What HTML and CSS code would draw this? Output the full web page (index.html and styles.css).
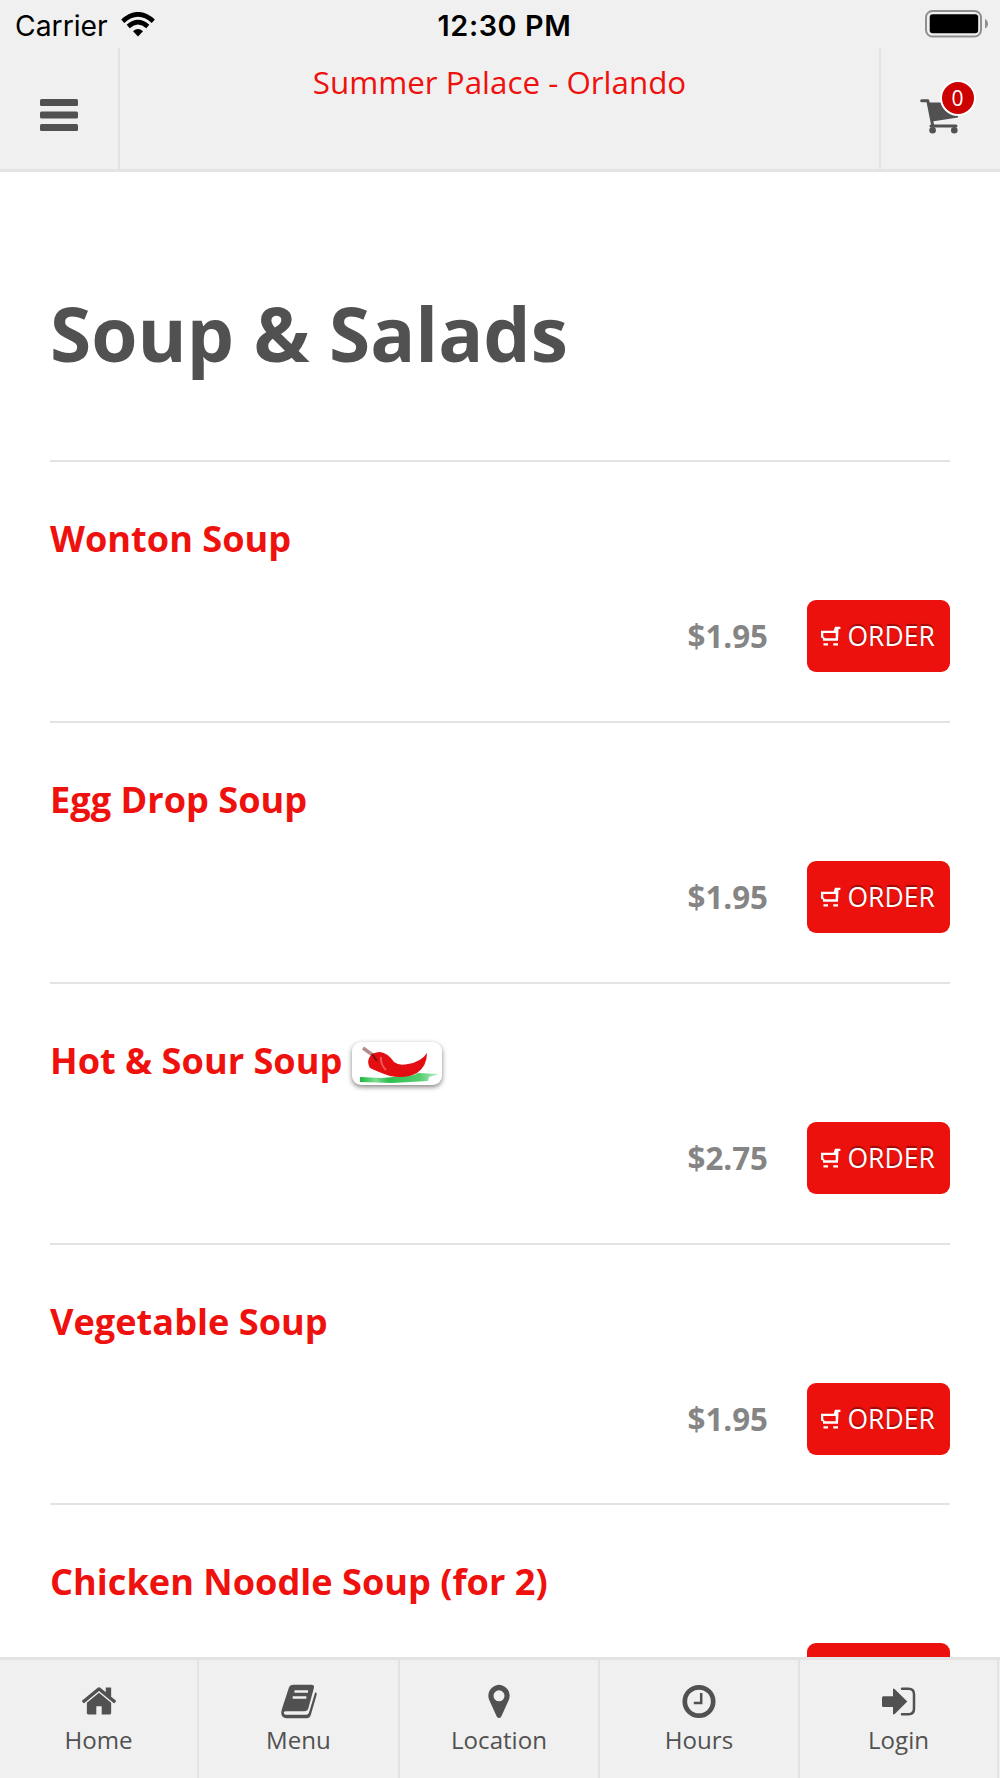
FILE: index.html
```html
<!DOCTYPE html>
<html lang="en">
<head>
<meta charset="utf-8">
<title>Summer Palace - Orlando</title>
<link rel="stylesheet" href="styles.css">
</head>
<body>
<svg class="defs" width="0" height="0" aria-hidden="true">
  <symbol id="order-cart" viewBox="0 0 20 20">
    <path fill-rule="evenodd" d="M0 4.700H12.700L14 .8H19.400V3H17.500L17 14.700H2V12.500L0 11.500ZM2.300 7V10.500L4 12.300H14.700V7Z" fill="currentColor"/>
    <path d="M2.500 17.200H7V19.600H2.500zM12.300 17.200H17V19.600H12.300z" fill="currentColor"/>
  </symbol>
</svg>
<div class="app">
  <div class="status">
    <div class="carrier"><span class="carrier-name">Carrier</span>
      <svg class="wifi" viewBox="0 0 34 25"><path d="M1.700 9.200Q17-4.600 32.300 9.200" fill="none" stroke="#000" stroke-width="4.600"/><path d="M7.200 14.500Q17 5.700 26.800 14.500" fill="none" stroke="#000" stroke-width="4.600"/><path d="M12 19.200Q17 14.800 22 19.200L17 24.400Z"/></svg>
    </div>
    <div class="time">12:30 PM</div>
    <svg class="battery" viewBox="0 0 64 28"><rect x="1" y="1" width="55" height="25.500" rx="6.500" fill="none" stroke="#8f8f8f" stroke-width="2"/><rect x="4.700" y="4.300" width="48.500" height="19" rx="3"/><path d="M60 9Q63 10.500 63 13.700T60 18.500Z" fill="#8f8f8f"/></svg>
  </div>
  <header class="header">
    <div class="side left"><svg class="burger" viewBox="0 0 38 32"><rect width="38" height="7" rx="1.500"/><rect y="12.500" width="38" height="7" rx="1.500"/><rect y="25" width="38" height="7" rx="1.500"/></svg></div>
    <div class="place">Summer Palace - Orlando</div>
    <div class="side right"><svg class="cart" viewBox="0 0 42 36"><path d="M1.700 1.800H7.800L12.600 26" fill="none" stroke="currentColor" stroke-width="3" stroke-linecap="round" stroke-linejoin="round"/><path d="M8.500 3.500H38V18.500L12 22.500Z"/><path d="M11 27H36" fill="none" stroke="currentColor" stroke-width="3" stroke-linecap="round"/><circle cx="12.600" cy="31.300" r="3.300"/><circle cx="34.300" cy="31.300" r="3.300"/></svg><span class="badge">0</span></div>
  </header>
  <main class="content">
    <h1 class="heading">Soup &amp; Salads</h1>
    <section class="item"><h2 class="name">Wonton Soup</h2><div class="buy"><span class="price">$1.95</span><span class="order"><svg class="oi"><use href="#order-cart"/></svg><span class="ot">ORDER</span></span></div></section>
    <section class="item"><h2 class="name">Egg Drop Soup</h2><div class="buy"><span class="price">$1.95</span><span class="order"><svg class="oi"><use href="#order-cart"/></svg><span class="ot">ORDER</span></span></div></section>
    <section class="item"><h2 class="name">Hot &amp; Sour Soup<span class="spicy"><svg class="chili" viewBox="0 0 90 43"><defs><linearGradient id="g"><stop offset="0" stop-color="#18b83e"/><stop offset=".2" stop-color="#7fdc94"/><stop offset=".35" stop-color="#2fbf50"/><stop offset=".75" stop-color="#52cc6d"/><stop offset="1" stop-color="#c4efcd"/></linearGradient></defs><path d="M8 35L30 36L62 33L66 31L87 32L77 35L76 39L40 41L8 40Z" fill="url(#g)"/><path d="M11 6L22 14" stroke="#b58b8b" stroke-width="3.500"/><path d="M17 16Q20 10 28 10Q36 11 42 20Q47 24 56 22Q69 20 75 11Q75 24 65 31Q54 37 38 34Q26 30 18 26Q15 21 17 16Z" fill="#e30d12"/><path d="M20 12L25 19" stroke="#7c1010" stroke-width="2"/><path d="M29 15Q28 22 34 28" fill="none" stroke="#ee5a5a" stroke-width="2"/></svg></span></h2><div class="buy"><span class="price">$2.75</span><span class="order"><svg class="oi"><use href="#order-cart"/></svg><span class="ot">ORDER</span></span></div></section>
    <section class="item"><h2 class="name">Vegetable Soup</h2><div class="buy"><span class="price">$1.95</span><span class="order"><svg class="oi"><use href="#order-cart"/></svg><span class="ot">ORDER</span></span></div></section>
    <section class="item"><h2 class="name">Chicken Noodle Soup (for 2)</h2><div class="buy"><span class="order"></span></div></section>
  </main>
  <nav class="tabs">
    <div class="tab"><svg class="ti" viewBox="0 0 36 36"><path transform="translate(-.900 -2) scale(.0211)" d="M1472 992v480q0 26-19 45t-45 19h-384v-384h-256v384h-384q-26 0-45-19t-19-45v-480q0-1 .5-3t.5-3l575-474 575 474q1 2 1 6zm223-69l-62 74q-8 9-21 11h-3q-13 0-21-7l-692-577-692 577q-12 8-24 7-13-2-21-11l-62-74q-8-10-7-23.500t11-21.500l719-599q32-26 76-26t76 26l244 204v-195q0-14 9-23t23-9h192q14 0 23 9t9 23v408l219 182q10 8 11 21.500t-7 23.500z"/></svg><span class="tl">Home</span></div>
    <div class="tab"><svg class="ti" viewBox="0 0 36 36"><path d="M12.500 .8H30.500Q33.800 .8 32.900 4L27.300 24.500Q26.500 27.300 23.500 27.300H5Q3 27.300 2.800 28.500Q2.700 30.600 5 30.800H25.200Q27.400 30.800 28 28.500L34.200 8.300Q36.200 8.700 35.600 11L29.800 31Q28.700 34.200 25.500 34.200H5.500Q.3 34 .3 29Q.3 27 1 24.800L7.800 4Q8.800 .8 12.500 .8Z"/><path d="M13.500 7.500H27M11.700 13.500H25.300" stroke="#f0f0f0" stroke-width="2.600"/></svg><span class="tl">Menu</span></div>
    <div class="tab"><svg class="ti" viewBox="0 0 36 36"><path fill-rule="evenodd" d="M18 .8A11 11 0 0 1 28 15.500L20.300 32.500Q18 35.700 15.700 32.500L8 15.500A11 11 0 0 1 18 .8ZM18 6.300a5.500 5.500 0 1 0 0 11a5.500 5.500 0 1 0 0-11Z"/></svg><span class="tl">Location</span></div>
    <div class="tab"><svg class="ti" viewBox="0 0 36 36"><circle cx="18" cy="17.500" r="14.200" fill="none" stroke="currentColor" stroke-width="4.700"/><path d="M20.200 9V19H12.800" fill="none" stroke="currentColor" stroke-width="2.500"/></svg><span class="tl">Hours</span></div>
    <div class="tab"><svg class="ti" viewBox="0 0 36 36"><path d="M2.300 12.200H12V6Q12 3.700 13.800 5.200L26.300 17.500L13.800 30Q12 31.200 12 29.200V23H2.300Q1 23 1 21.500V13.700Q1 12.200 2.300 12.200Z"/><path d="M21 4.800H27.500Q33 4.800 33 10.300V24.800Q33 30.200 27.500 30.200H21" fill="none" stroke="currentColor" stroke-width="2.500" stroke-linecap="round"/></svg><span class="tl">Login</span></div>
  </nav>
</div>
</body>
</html>
```
FILE: styles.css
```css
* { box-sizing: border-box; }
body { margin: 0; background: #fff; font-family: "Open Sans", sans-serif; color: #515151; }
svg { fill: currentColor; display: block; flex: none; }
.defs { position: absolute; }
.app { width: 1000px; height: 1778px; display: flex; flex-direction: column; overflow: hidden; }
.status { height: 48px; background: #f0f0f0; display: grid; grid-template-columns: 1fr auto 1fr; color: #000; font-family: Inter, sans-serif; font-size: 28.3px; line-height: 52px; }
.carrier { display: flex; padding-left: 15px; }
.carrier-name { width: 106px; white-space: nowrap; }
.wifi { width: 34px; height: 25px; margin-top: 12px; }
.time { font-weight: 600; font-size: 28.8px; padding-left: 9px; letter-spacing: 0.6px; }
.battery { width: 64px; height: 28px; margin-top: 10px; justify-self: end; margin-right: 11px; }
.header { height: 124px; background: #f0f0f0; border-bottom: 3px solid #e4e4e4; display: grid; grid-template-columns: 120px 1fr 121px; flex: none; }
.side { display: flex; }
.left { border-right: 2px solid #e3e3e3; padding: 51px 0 0 40px; }
.right { border-left: 2px solid #e3e3e3; padding: 51px 0 0 39px; position: relative; }
.burger { width: 38px; height: 32px; }
.cart { width: 42px; height: 36px; }
.badge { position: absolute; left: 58.5px; top: 32px; width: 36px; height: 36px; border-radius: 50%; border: 2px solid #fff; background: #cc0000; color: #fff; font-size: 21px; line-height: 33px; text-align: center; }
.place { color: #ee110d; font-size: 31.35px; line-height: 42px; padding-top: 13px; text-align: center; white-space: nowrap; }
.content { flex: 1; min-height: 0; overflow: hidden; padding: 0 50px; }
.heading { margin: 0; height: 288px; padding-top: 110px; font-size: 74.8px; line-height: 102px; font-weight: 700; white-space: nowrap; }
.item { height: 260.87px; border-top: 2px solid #e3e3e3; padding-top: 49px; }
.name { margin: 0; height: 89px; color: #ee110d; font-size: 36.15px; line-height: 54px; font-weight: 700; display: flex; white-space: nowrap; }
.spicy { width: 90px; height: 43px; margin: 9px 0 0 10px; border-radius: 9px; background: #fff; box-shadow: 0 2px 5px rgba(0,0,0,.5); }
.chili { width: 90px; height: 43px; }
.buy { display: flex; justify-content: flex-end; align-items: center; gap: 39px; }
.price { color: #858585; font-weight: 700; font-size: 31.3px; }
.order { width: 143px; height: 72px; border-radius: 9px; background: #ed110d; color: #fff; display: flex; align-items: center; padding-left: 14px; font-size: 26.5px; text-shadow: 0 -2px 1px rgba(0,0,0,.35); }
.oi { width: 20px; height: 20px; margin-right: 6.5px; }
.tabs { height: 121px; flex: none; border-top: 3px solid #e3e3e3; background: #f0f0f0; display: grid; grid-template-columns: 199px 201px repeat(3, 200px); }
.tab { border-right: 2px solid #e3e3e3; display: flex; flex-direction: column; align-items: center; padding-top: 24px; font-size: 24.1px; }
.tab:last-child { margin-right: 1px; }
.ti { width: 36px; height: 36px; }
.tl { line-height: 34px; margin-top: 3px; }
```
